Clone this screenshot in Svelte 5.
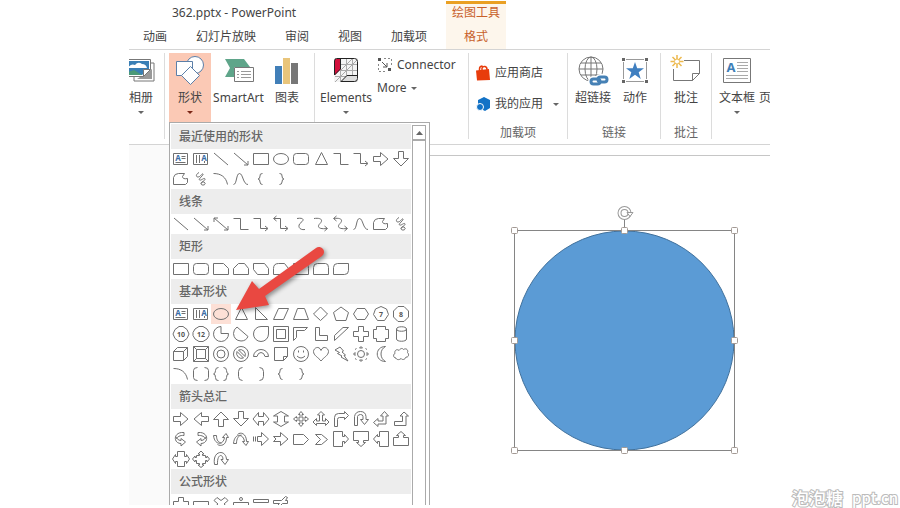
<script lang="ts">
    type Shape = keyof typeof shapes;

    const shapes = {
        textBox: 'M2.5 4.5h14v11h-14zM10.5 7.5h4M10.5 9.5h4M4.5 13.5h10',
        verticalText: 'M2.5 4.5h14v11h-14zM5.5 6v8M8.5 6v8M13.5 12v2',
        line: 'M3 4L17 16',
        arrow: 'M3 4L17 16M17 12v4h-4',
        doubleArrow: 'M3 4L17 16M17 12v4h-4M3 8V4h4',
        elbow: 'M2.5 4.5h7v11h8',
        elbowArrow: 'M2.5 4.5h7v10h7M14 12l3 2.5-3 2.5',
        elbowDouble: 'M3 4.5h6.5v10h7M14 12l3 2.5-3 2.5M5.5 2l-3 2.5L5.5 7',
        curved: 'M6 4.5c6-1 8 1 4 4s-2 8 4 7',
        curvedArrow: 'M3 4.5c8-1 9 2 6 5s-2 6 7 5M13.5 12l3 2.5-3 2.5',
        curvedDouble: 'M3 4.5c8-1 9 2 6 5s-2 6 7 5M13.5 12l3 2.5-3 2.5M5.5 2l-3 2.5L5.5 7',
        curve: 'M2.5 15.5C6 15.5 5 4.5 8.5 4.5S12 15.5 17 15.5',
        freeform: 'M2.5 15.5v-7q1-4 5-4h6l-2 3q0 3 5 2v4l-2 2z',
        scribble: 'M8 3.5C5 5 4.500 8 7 8s4-4 5-3-5 5-3.500 6 5-3 5.500-1-5 3-4 5 5 1 4-1-4-1-3.500.500',
        arc: 'M2.5 4.5C10 4.5 15 8 16.5 15.5',
        leftBrace: 'M11.5 4.5q-3 0-2.5 2.5 0 3-2 3 2 0 2 3 0 2.500 2.500 2.500',
        rightBrace: 'M8.500 4.500q3 0 2.500 2.500 0 3 2 3-2 0-2 3 0 2.500-2.500 2.500',
        leftBracket: 'M11.500 3.500q-4 0-4 4v5q0 4 4 4',
        rightBracket: 'M8.500 3.500q4 0 4 4v5q0 4-4 4',
        bracketPair: 'M6.500 3.500q-4 0-4 3v7q0 3 4 3M13.500 3.500q4 0 4 3v7q0 3-4 3',
        bracePair: 'M7.500 3.500q-3 0-3 3t-2 3.500q2 0 2 3.500t3 3M12.500 3.500q3 0 3 3t2 3.500q-2 0-2 3.500t-3 3',
        rectangle: 'M2.5 4.5h15v11h-15z',
        rounded: 'M5.5 4.5h9q3 0 3 3v5q0 3-3 3h-9q-3 0-3-3v-5q0-3 3-3z',
        ellipse: 'M2.5 10a7.500 5.500 0 1 0 15 0a7.500 5.500 0 1 0-15 0z',
        triangle: 'M10.5 3.500L16.500 15.500H4.500z',
        rightTriangle: 'M4.5 3.500v12h12z',
        snipOne: 'M2.5 4.5h10l5 5v6h-15z',
        snipTwo: 'M2.5 15.500v-6l5-5h6l4 5v6z',
        snipDiagonal: 'M2.5 4.5h11l4 5v6h-11l-4-5z',
        snipRound: 'M2.5 15.500v-6q0-5 5-5h6l4 5v6z',
        roundOne: 'M2.5 4.5h11q4 0 4 5v6h-15z',
        roundTwo: 'M2.5 15.500v-7q0-4 4-4h8q3 0 3 4v7z',
        roundDiagonal: 'M2.5 15.500v-7q0-4 4-4h11v7q0 4-4 4z',
        parallelogram: 'M7.500 4.500h10l-5 11h-10z',
        trapezoid: 'M6.500 4.500h7l4 11h-15z',
        diamond: 'M9.500 3L16.500 10l-7 6.500L2.500 10z',
        pentagon: 'M10 3l7.500 5.500-2.500 8H5l-2.500-8z',
        hexagon: 'M6 4.500h8l3.500 5.500-3.500 5.500H6L2.500 10z',
        heptagon: 'M10 2.500l5.500 2.500 2 5.500-4 6h-7l-4-6 2-5.500z',
        octagon: 'M7 2.500h6l4.500 4.500v6L13 17.500H7L2.500 13V7z',
        decagon: 'M8 2.500h4l4 3 2 4.500-2 4.500-4 3H8l-4-3L2 10l2-4.500z',
        dodecagon: 'M8 2.500h4l4 2.500 2 3.500v3l-2 3.500-4 2.500H8L4 15l-2-3.500v-3L4 5z',
        pie: 'M10 2.500v7h7.500a7.500 7.500 0 1 1-7.500-7z',
        chord: 'M6 3L17 12.500Q15 17 10 17q-7-.5-7.500-7.500 0-4 3.500-6.500z',
        teardrop: 'M10 2.500h7.500V10A7.500 7.500 0 1 1 10 2.500z',
        frame: 'M2.500 2.500h15v15h-15zM5.500 5.500h9v9h-9z',
        halfFrame: 'M2.500 3.500h14l-3 3h-8v7l-3 3z',
        lShape: 'M4.500 3.500h4v8h8v5h-12z',
        diagonalStripe: 'M12 3.500h5.500L3.500 16.500v-5z',
        cross: 'M7.500 2.500h5v5h5v5h-5v5h-5v-5h-5v-5h5z',
        plaque: 'M5.500 2.500h9v3h3v9h-3v3h-9v-3h-3v-9h3z',
        can: 'M5.500 5v10c0 3 10 3 10 0V5c0-3-10-3-10 0c0 3 10 3 10 0',
        cube: 'M2.500 7.500h10v9h-10zM2.500 7.500l4-4h10l-4 4M16.500 3.500v9l-4 4',
        bevel: 'M2.500 2.500h15v15h-15zM5.500 5.500h9v9h-9zM2.500 2.500l3 3M17.500 2.500l-3 3M2.500 17.500l3-3M17.500 17.500l-3-3',
        donut: 'M2.500 10a7.500 7.500 0 1 0 15 0a7.500 7.500 0 1 0-15 0M6 10a4 4 0 1 0 8 0a4 4 0 1 0-8 0',
        noSymbol: 'M2.500 10a7.500 7.500 0 1 0 15 0a7.500 7.500 0 1 0-15 0M6 7.500l6.500 6.500a5 5 0 0 1-6.500-6.500zM7.500 6l6.500 6.500A5 5 0 0 0 7.500 6z',
        blockArc: 'M2.500 12.500a7.500 7 0 0 1 15 0h-3.500q-1-4-4-4t-4 4z',
        foldedCorner: 'M3.500 3.500h13v9l-4 4h-9zM12.500 16.500v-4h4',
        smiley: 'M2.500 10a7.500 7.500 0 1 0 15 0a7.500 7.500 0 1 0-15 0M6 12q4 4 8 0M7.500 6.500v2M12.500 6.500v2',
        heart: 'M10 6.500C8 1 2.500 4 2.500 7.500c0 4 5 6 7.500 9.500 2.500-3.500 7.500-5.500 7.500-9.500C17.500 4 12 1 10 6.500z',
        lightning: 'M4 6l5-3 3.500 4-1.500 1 3.500 3-1.500.500 4 5.500-7-4 1-1-4.500-2.500 2-1z',
        sun: 'M6.500 10a3.500 3.500 0 1 0 7 0a3.500 3.500 0 1 0-7 0M8.500 4L10 2.500 11.500 4zM8.500 16l1.500 1.500 1.500-1.500zM4 8.500L2.500 10 4 11.500zM16 8.500l1.500 1.500-1.500 1.500zM4 5.500l1.500-1M14.500 4.500l1.500 1M4 14.500l1.500 1M14.500 15.500l1.500-1',
        moon: 'M14.500 2.500c-11 0-11 15 0 15-6-3-6-12 0-15z',
        cloud: 'M5 14c-3 0-3-4-1-4.500-1-3 2-5 4-3 2-3 4-2 4.500-1 3-2 5 1 4 3 2 2 1 5-1.500 4.500-1 3-4 3-5 1.500-2 2-5 1-5-.5z',
        right: 'M2.500 7.500h7v-4l7.500 6.500-7.500 6.500v-4h-7z',
        left: 'M17.500 7.500h-7v-4L3 10l7.500 6.500v-4h7z',
        up: 'M7.500 17.500v-7h-5L10 3l7.500 7.500h-5v7z',
        down: 'M7.500 2.500v7h-5L10 17l7.500-7.500h-5v-7z',
        leftRight: 'M2 10l5.500-6.500v4h5v-4L18 10l-5.500 6.500v-4h-5v4z',
        upDown: 'M10 2.500l7.500 4.500h-4v6h4L10 17.500 2.500 13h4V7h-4z',
        quad: 'M10 2.500l2.500 3h-1.500V9h3.500V7.500l3 2.500-3 2.500V11H11v3.500h1.500l-2.500 3-2.500-3H9V11H5.500v1.500L2.500 10l3-2.500V9H9V5.500H7.500z',
        leftRightUp: 'M10 2.500L13.500 6h-2v6h3V9.500L18 13l-3.500 3.500v-2h-9v2L2 13l3.500-3.500V12h3V6h-2z',
        bent: 'M3.500 17.500V8.500q0-4 4-4h6v-2l4 4-4 4v-2h-5q-2 0-2 2v7z',
        uTurn: 'M3.500 16.500v-9q1-5 6-5t5.500 5v3h2.500l-4 5-4-5H12v-3q0-2-2.500-2t-3 2v9z',
        leftUp: 'M2.500 13.500L7 9.500v2.500h5V7H9.500l4-4.500 4 4.500H15v8H7v2.500z',
        bentUp: 'M3.500 12.500h8V7H9l4-4 4.500 4H15v9.500H3.500z',
        curvedRight: 'M13 3.500C2 2.500 2 14.500 10 14.500V17l4.500-4L10 9.500v2C7 11.500 5.500 9 5 8M13 3.500v3C9 6 6 8 5.500 10',
        curvedLeft: 'M7 3.500C18 2.500 18 14.500 10 14.500V17l-4.500-4L10 9.500v2c3 0 4.500-2.500 5-3.500M7 3.500v3C11 6 14 8 14.500 10',
        curvedUp: 'M2.500 6.500c1 10 10 10 11 2h-2l3.500-4 2.500 4h-2c0 8-6 9-9 7M2.500 6.500h3c0 5 2 7 5 7.500',
        curvedDown: 'M2.500 14.500c1-11 10-10 11-2h-2l3.500 4 2.500-4h-2c0-8-6-10-9-7M2.500 14.500h3c0-5 2-8 5-8.500',
        striped: 'M2.500 7.500v5M4.500 7.500v5M6.500 7.500h4v-4l7 6.500-7 6.500v-4h-4z',
        notched: 'M2.500 7.500h7v-4l7.500 6.500-7.500 6.500v-4h-7l2.500-2.500z',
        pentagonArrow: 'M2.500 5.500h10l5 5-5 5h-10z',
        chevron: 'M4.500 5.500h6l6 5-6 5h-6l5-5z',
        rightCallout: 'M2.500 2.500h9v5h2v-2l4 4.500-4 4.500v-2h-2v5h-9z',
        downCallout: 'M2.500 2.500h15v9h-5v2h2L10 17.500l-4.500-4h2v-2h-5z',
        leftCallout: 'M17.500 2.500h-9v5h-2v-2L2.500 10l4 4.500v-2h2v5h9z',
        upCallout: 'M2.500 16.500v-8h5v-2h-2L10 2.500l4.500 4h-2v2h5v8z',
        leftRightCallout: 'M6.500 2.500h7v5h2v-2l3 4.500-3 4.500v-2h-2v5h-7v-5h-2v2l-3-4.500 3-4.500v2h2z',
        quadCallout: 'M10 2l3 3h-1.500v1.500h3v2H16V7l2.500 3-2.500 3v-1.500h-1.500v3h-3V16H13l-3 2.500L7 16h1.500v-1.500h-3v-3H4V13l-2.500-3L4 7v1.500h1.500v-2h3V5H7z',
        circular: 'M3.500 15.500C1 1 15 0 15.500 10.500h2l-3.500 5-4-5h2c0-6-6-6-5.500 5z',
        plus: 'M7.500 3.500h5v4h5v5h-5v4h-5v-4h-5v-5h5z',
        minus: 'M2.500 7.500h15v5h-15z',
        multiply: 'M6 3.500l4 3 4-3 3 3-4 3.500 4 3.500-3 3-4-3-4 3-3-3L7 10 3 6.500z',
        divide: 'M2.500 8.500h15v3h-15zM8.500 5a1.500 1.500 0 1 0 3 0a1.500 1.500 0 1 0-3 0M8.500 15a1.500 1.500 0 1 0 3 0a1.500 1.500 0 1 0-3 0',
        equal: 'M2.500 5.500h15v3h-15zM2.500 11.500h15v3h-15z',
        notEqual: 'M2.500 6.500h8l4-4 2 1-2 3h2v3h-5l-2 2h7v3h-9l-3 3-2-1 2-2h-2v-3h4l2-2h-6z'
    };

    // Small labels drawn inside some of the shapes: text, x, y, blue letter
    const glyphs: Record<string, [string, number, number, boolean]> = {
        textBox: ['A', 7, 12, true],
        verticalText: ['A', 13, 12, true],
        heptagon: ['7', 10, 13, false],
        octagon: ['8', 10, 13, false],
        decagon: ['10', 10, 13, false],
        dodecagon: ['12', 10, 13, false]
    };

    const sections: { title: string; items: Shape[] }[] = [
        {
            title: '最近使用的形状',
            items: [
                'textBox', 'verticalText', 'line', 'arrow', 'rectangle', 'ellipse',
                'rounded', 'triangle', 'elbow', 'elbowArrow', 'right', 'down',
                'freeform', 'scribble', 'arc', 'curve', 'leftBrace', 'rightBrace'
            ]
        },
        {
            title: '线条',
            items: [
                'line', 'arrow', 'doubleArrow', 'elbow', 'elbowArrow', 'elbowDouble',
                'curved', 'curvedArrow', 'curvedDouble', 'curve', 'freeform', 'scribble'
            ]
        },
        {
            title: '矩形',
            items: [
                'rectangle', 'rounded', 'snipOne', 'snipTwo', 'snipDiagonal',
                'snipRound', 'roundOne', 'roundTwo', 'roundDiagonal'
            ]
        },
        {
            title: '基本形状',
            items: [
                'textBox', 'verticalText', 'ellipse', 'triangle', 'rightTriangle', 'parallelogram',
                'trapezoid', 'diamond', 'pentagon', 'hexagon', 'heptagon', 'octagon',
                'decagon', 'dodecagon', 'pie', 'chord', 'teardrop', 'frame',
                'halfFrame', 'lShape', 'diagonalStripe', 'cross', 'plaque', 'can',
                'cube', 'bevel', 'donut', 'noSymbol', 'blockArc', 'foldedCorner',
                'smiley', 'heart', 'lightning', 'sun', 'moon', 'cloud',
                'arc', 'bracketPair', 'bracePair', 'leftBracket', 'rightBracket', 'leftBrace', 'rightBrace'
            ]
        },
        {
            title: '箭头总汇',
            items: [
                'right', 'left', 'up', 'down', 'leftRight', 'upDown',
                'quad', 'leftRightUp', 'bent', 'uTurn', 'leftUp', 'bentUp',
                'curvedRight', 'curvedLeft', 'curvedUp', 'curvedDown', 'striped', 'notched',
                'pentagonArrow', 'chevron', 'rightCallout', 'downCallout', 'leftCallout', 'upCallout',
                'leftRightCallout', 'quadCallout', 'circular'
            ]
        },
        {
            title: '公式形状',
            items: ['plus', 'minus', 'multiply', 'divide', 'equal', 'notEqual']
        }
    ];

    const tabs = ['动画', '幻灯片放映', '审阅', '视图', '加载项'];

    const handles = [
        [6, 24], [116, 24], [226, 24],
        [6, 134], [226, 134],
        [6, 244], [116, 244], [226, 244]
    ];

    let selected = $state('基本形状/ellipse');
</script>

{#snippet caret()}
    <svg class="caret" width="6" height="3" viewBox="0 0 6 3"><path d="M0 0h6L3 3z" /></svg>
{/snippet}

<div class="page">
    <div class="window">
        <header>
            <div class="titles">
                <div class="title">362.pptx - PowerPoint</div>
                <nav>
                    {#each tabs as tab}
                        <button>{tab}</button>
                    {/each}
                </nav>
            </div>
            <div class="context-tab">
                <span>绘图工具</span>
                <button>格式</button>
            </div>
        </header>

        <div class="ribbon">
            <div class="group album">
                <button class="big">
                    <svg width="30" height="30" viewBox="0 0 30 30">
                        <path d="M8 8h20v18H8z" fill="#fff" stroke="#777" />
                        <path d="M11 24h15V14z" fill="#999" />
                        <path d="M1 4.500h23.500v10l-7 7H1z" fill="#fff" stroke="#777" />
                        <path d="M2 6h21v8l-7 6H2z" fill="#3a7fb5" />
                        <path d="M2 13q3-5 7-3 3-4 7-1 4 0 5 4H2z" fill="#fff" />
                        <path d="M2 17l6-2 8 5H2z" fill="#4c9a78" />
                        <path d="M24.500 14.500h-7v7z" fill="#fff" stroke="#777" />
                    </svg>
                    <span>相册</span>
                    {@render caret()}
                </button>
            </div>

            <div class="group illustrations">
                <button class="big active" aria-expanded="true">
                    <svg width="30" height="30" viewBox="0 0 30 30">
                        <circle cx="20" cy="10" r="8.500" fill="#fff" stroke="#5c7fa8" />
                        <path d="M1.500 6.500h16v14h-16z" fill="#fff" stroke="#5c7fa8" />
                        <path d="M15.500 11.500l9 9-9 9-9-9z" fill="#fff" stroke="#5c7fa8" />
                    </svg>
                    <span>形状</span>
                    {@render caret()}
                </button>
                <button class="big smartart">
                    <svg width="30" height="30" viewBox="0 0 30 30">
                        <path d="M1 4h19l6 8H10v10H1l5-9z" fill="#5fa58a" />
                        <path d="M10.500 12.500h19v14h-19z" fill="#fff" stroke="#777" />
                        <path d="M13 16.500h2M17 16.500h10M13 19.500h2M17 19.500h10M13 22.500h2M17 22.500h10" stroke="#999" />
                    </svg>
                    <span>SmartArt</span>
                </button>
                <button class="big">
                    <svg width="30" height="30" viewBox="0 0 30 30">
                        <path d="M3 11h7v18H3z" fill="#417fb8" />
                        <path d="M11 3h7v26h-7z" fill="#e9c57b" />
                        <path d="M19 8h7v21h-7z" fill="#777" />
                    </svg>
                    <span>图表</span>
                </button>
            </div>

            <div class="group elements">
                <button class="big">
                    <svg width="30" height="30" viewBox="0 0 30 30">
                        <path d="M3 3h24v24H3z" fill="#f4f4f4" />
                        <path d="M4 4h6v10l-6 6z" fill="#d2103c" />
                        <path d="M15 21h11v6H10z" fill="#ddd" />
                        <path d="M10 9.500h16M10 15.500h16M4 21.500h11M9.500 15v12M15.500 4v17M21.500 4v17M4 27L26 5M10 15L21 4" stroke="#aaa" />
                        <path d="M3.500 20V6q0-2.500 2-2.500h18q3 0 3 3v17q0 3-3 3H10l6-6h10M3.500 20l6-6V4" fill="none" stroke="#222" />
                    </svg>
                    <span>Elements</span>
                    {@render caret()}
                </button>
                <div class="stack tight">
                    <button class="small">
                        <svg width="16" height="16" viewBox="0 0 16 16">
                            <path d="M1 1h3v3H1zM11 11h3v3h-3z" fill="#555" />
                            <path d="M5 5l5 5M10 6v4H6" stroke="#555" fill="none" />
                            <path d="M1.500 7v7.500h8M7 1.500h7.500V9" fill="none" stroke="#888" stroke-dasharray="2 2" />
                        </svg>
                        Connector
                    </button>
                    <button class="small">More {@render caret()}</button>
                </div>
            </div>

            <div class="group apps">
                <div class="stack">
                    <button class="small">
                        <svg width="15" height="16" viewBox="0 0 15 16">
                            <path d="M0 5.500L13 4l1 11-13 .5z" fill="#e83c0c" />
                            <path d="M3.500 7V4q0-3 3-3M6 6V3q1-2 3-1.500t2 3V6" fill="none" stroke="#e83c0c" stroke-width="1.500" />
                        </svg>
                        应用商店
                    </button>
                    <button class="small my-apps">
                        <svg width="15" height="16" viewBox="0 0 15 16">
                            <path d="M2 4l6-3 6 3v8l-5 3-2-1V9L2 8z" fill="#1272c6" />
                            <circle cx="4" cy="11" r="3.500" fill="#1272c6" stroke="#fff" />
                        </svg>
                        我的应用
                        {@render caret()}
                    </button>
                </div>
                <div class="label">加载项</div>
            </div>

            <div class="group links">
                <div class="row">
                    <button class="big hyperlink">
                        <svg width="34" height="32" viewBox="0 0 34 32">
                            <g fill="none" stroke="#777">
                                <circle cx="15" cy="14" r="12" />
                                <ellipse cx="15" cy="14" rx="6" ry="12" />
                                <path d="M15 2v24M3 14h24M5 8h20M5 20h20" />
                            </g>
                            <g fill="none" stroke="#fff" stroke-width="6">
                                <rect x="15" y="24" width="9" height="5" rx="2.500" />
                                <rect x="22" y="22" width="9" height="5" rx="2.500" />
                            </g>
                            <g fill="none" stroke="#4681b5" stroke-width="3">
                                <rect x="15" y="24" width="9" height="5" rx="2.500" />
                                <rect x="22" y="22" width="9" height="5" rx="2.500" />
                            </g>
                        </svg>
                        <span>超链接</span>
                    </button>
                    <button class="big">
                        <svg width="30" height="30" viewBox="0 0 30 30">
                            <path d="M6 4.500h18M6 26.500h18M3.500 7v17M26.500 7v17" fill="none" stroke="#999" />
                            <path d="M2 3h3v3H2zM25 3h3v3h-3zM2 25h3v3H2zM25 25h3v3h-3z" fill="#666" />
                            <path d="M15 7l2.200 6.200H24l-5.300 4 2 6.800-5.700-4.200L9.300 24l2-6.800L6 13.200h6.800z" fill="#3f7fc0" />
                        </svg>
                        <span>动作</span>
                    </button>
                </div>
                <div class="label">链接</div>
            </div>

            <div class="group comments">
                <button class="big">
                    <svg width="34" height="30" viewBox="0 0 34 30">
                        <path d="M4.500 14v11.500h19l7-7v-13H15" fill="none" stroke="#777" />
                        <path d="M23.500 25.500v-7h7z" fill="#fff" stroke="#777" />
                        <path d="M8 0v4M8 9v4M1.500 6.500h4M10.500 6.500h4M3.500 2l3 3M9.500 8l3 3M12.500 2l-3 3M6.500 8l-3 3" stroke="#edb94e" stroke-width="1.500" />
                        <circle cx="8" cy="6.500" r="2.500" fill="#fff" stroke="#edb94e" />
                    </svg>
                    <span>批注</span>
                </button>
                <div class="label">批注</div>
            </div>

            <div class="group text">
                <button class="big">
                    <svg width="30" height="30" viewBox="0 0 30 30">
                        <path d="M1.500 3.500h27v24h-27z" fill="#fff" stroke="#777" />
                        <path d="M15 7.500h11M15 10.500h11M15 13.500h11M15 16.500h11M4 20.500h22M4 23.500h22" stroke="#aaa" />
                        <text x="9" y="17" class="letter">A</text>
                    </svg>
                    <span>文本框</span>
                    {@render caret()}
                </button>
                <button class="big page-number">
                    <svg width="30" height="30"></svg>
                    <span>页</span>
                </button>
            </div>
        </div>

        <main>
            <div class="thumbnails"></div>
            <div class="slide">
                <svg class="selection" width="232" height="252" viewBox="0 0 232 252">
                    <circle cx="116.500" cy="134.500" r="109.500" fill="#5b9bd5" stroke="#41719c" />
                    <path d="M6.500 24.500h220v220h-220zM116.500 24V13" fill="none" stroke="#858585" />
                    <circle cx="116.500" cy="7" r="5" fill="none" stroke="#999" stroke-width="4" />
                    <circle cx="116.500" cy="7" r="5" fill="none" stroke="#fff" stroke-width="2" />
                    <path d="M119 6.500h6l-3 4z" fill="#fff" stroke="#999" />
                    {#each handles as [x, y]}
                        <rect x={x - 2.5} y={y - 2.5} width="6" height="6" rx="1" fill="#fff" stroke="#a39a95" />
                    {/each}
                </svg>
            </div>
        </main>

        <div class="gallery">
            <div class="sections">
                {#each sections as section}
                    <h2>{section.title}</h2>
                    <div class="grid">
                        {#each section.items as item}
                            {@const key = `${section.title}/${item}`}
                            <button
                                class:selected={selected === key}
                                aria-label={item}
                                onclick={() => (selected = key)}
                            >
                                <svg width="20" height="20" viewBox="0 0 20 20">
                                    <path d={shapes[item]} />
                                    {#if glyphs[item]}
                                        <text x={glyphs[item][1]} y={glyphs[item][2]} class:blue={glyphs[item][3]}>{glyphs[item][0]}</text>
                                    {/if}
                                </svg>
                            </button>
                        {/each}
                    </div>
                {/each}
            </div>
            <div class="scrollbar">
                <button aria-label="Scroll up">
                    <svg width="7" height="4" viewBox="0 0 7 4"><path d="M0 4h7L3.500 0z" fill="#666" /></svg>
                </button>
                <div class="thumb"></div>
            </div>
        </div>

        <svg class="pointer" width="100" height="74" viewBox="0 0 100 74">
            <path d="M4 65L20 36l7 8L84 3a5 5 0 0 1 6 8L33 51l4 9z" />
        </svg>
    </div>

    <div class="watermark"><span>泡泡糖</span><span class="site">ppt.cn</span></div>
</div>

<style>
    :global(body) {
        margin: 0;
        background: #fff;
    }

    .page {
        position: relative;
        box-sizing: border-box;
        height: 100vh;
        padding: 0 130px 3px 129px;
        font-family: 'Noto Sans', 'Noto Sans CJK SC', sans-serif;
        font-size: 12px;
        line-height: 16px;
        color: #444;
    }

    .window {
        position: relative;
        display: flex;
        flex-direction: column;
        height: 100%;
        overflow: hidden;
    }

    button {
        margin: 0;
        padding: 0;
        border: 0;
        background: none;
        font: inherit;
        color: inherit;
        white-space: nowrap;
    }

    svg {
        display: block;
        flex: none;
    }

    header {
        display: flex;
        gap: 19px;
        border-bottom: 1px solid #d4d4d4;
    }

    .titles {
        padding: 5px 0 0 14px;
    }

    .title {
        padding-left: 29px;
    }

    nav {
        display: flex;
        gap: 29px;
        padding-top: 8px;
    }

    .context-tab {
        display: flex;
        flex-direction: column;
        align-items: center;
        gap: 8px;
        width: 60px;
        margin-top: 1px;
        padding: 1px 0 4px;
        border-top: 3px solid #eaa023;
        background: #fdf6ec;
        color: #c8602a;
    }

    .ribbon {
        display: flex;
        padding: 3px 0 5px;
        border-bottom: 1px solid #d4d4d4;
    }

    .group {
        display: flex;
        flex: none;
        box-sizing: border-box;
        height: 86px;
        border-right: 1px solid #dcdcdc;
    }

    .big {
        display: flex;
        flex-direction: column;
        align-items: center;
        height: 70px;
        padding-top: 2px;
    }

    .big span {
        margin: 5px 0;
    }

    .caret {
        fill: #666;
    }

    .album {
        width: 36px;
        overflow: hidden;
    }

    .album .big {
        width: 24px;
    }

    .illustrations {
        width: 150px;
        padding-left: 4px;
    }

    .illustrations .big {
        width: 42px;
    }

    .illustrations .smartart {
        width: 55px;
    }

    .active {
        background: #fbc9b5;
    }

    .active .caret {
        fill: #7a2515;
    }

    .elements {
        width: 154px;
    }

    .elements .big {
        width: 62px;
    }

    .stack {
        display: flex;
        flex-direction: column;
        gap: 15px;
        padding-top: 12px;
    }

    .tight {
        gap: 7px;
        padding-top: 4px;
    }

    .small {
        display: flex;
        align-items: center;
        gap: 4px;
    }

    .my-apps .caret {
        margin-left: 6px;
    }

    .apps,
    .links,
    .comments {
        flex-direction: column;
        justify-content: space-between;
    }

    .apps {
        width: 99px;
    }

    .apps .stack {
        padding-left: 7px;
    }

    .links {
        width: 93px;
    }

    .row {
        display: flex;
    }

    .links .big {
        width: 34px;
    }

    .links .hyperlink {
        width: 50px;
    }

    .hyperlink svg {
        margin-bottom: -2px;
    }

    .comments {
        width: 51px;
    }

    .comments .big {
        align-self: stretch;
    }

    .label {
        line-height: 12px;
        text-align: center;
        color: #666;
    }

    .text {
        flex: 1;
        overflow: hidden;
        border: 0;
    }

    .text .big {
        flex: none;
        width: 50px;
    }

    .text .page-number {
        align-items: flex-start;
        margin-left: -3px;
    }

    .letter {
        font-size: 13px;
        font-weight: bold;
        text-anchor: middle;
        fill: #3f7fb8;
    }

    main {
        display: flex;
        flex: 1;
        min-height: 0;
    }

    .thumbnails {
        width: 40px;
        background: #fafafa;
    }

    .slide {
        position: relative;
        flex: 1;
        margin-top: 10px;
        border-top: 1px solid #c6c6c6;
    }

    .selection {
        position: absolute;
        top: 50px;
        left: 339px;
    }

    .gallery {
        position: absolute;
        top: 122px;
        bottom: 0;
        left: 40px;
        display: flex;
        box-sizing: border-box;
        width: 261px;
        padding: 1px 1px 0;
        overflow: hidden;
        border: 1px solid #aaa;
        border-bottom: 0;
        background: #fff;
    }

    .sections {
        width: 240px;
    }

    h2 {
        margin: 0;
        padding: 5px 8px 4px;
        background: #ededed;
        font-size: 12px;
        font-weight: 500;
        line-height: 16px;
        color: #666;
    }

    .grid {
        display: grid;
        grid-template-columns: repeat(12, 20px);
        grid-auto-rows: 20px;
    }

    .grid path {
        fill: none;
        stroke: #707070;
    }

    .grid text {
        font-size: 7px;
        font-weight: bold;
        text-anchor: middle;
        fill: #555;
    }

    .grid .blue {
        font-size: 8px;
        fill: #3b6ea5;
    }

    .selected {
        background: #fde0d6;
    }

    .scrollbar {
        display: flex;
        flex: 1;
        flex-direction: column;
        margin: 1px 2px 0 1px;
    }

    .scrollbar button {
        display: flex;
        align-items: center;
        justify-content: center;
        height: 15px;
        border: 1px solid #aaa;
    }

    .thumb {
        flex: 1;
        border: 1px solid #aaa;
        border-bottom: 0;
    }

    .pointer {
        position: absolute;
        top: 245px;
        left: 103px;
        overflow: visible;
        fill: #e94841;
        filter: drop-shadow(2px 2px 2px rgba(0, 0, 0, 0.4));
        pointer-events: none;
    }

    .watermark {
        position: absolute;
        right: 2px;
        bottom: 0;
        display: flex;
        align-items: center;
        gap: 9px;
        font-family: 'Noto Sans CJK SC', sans-serif;
        font-size: 17px;
        font-weight: 500;
        line-height: 20px;
        color: #fff;
        paint-order: stroke fill;
        -webkit-text-stroke: 2px #bbb;
    }

    .site {
        font-size: 15px;
    }
</style>
